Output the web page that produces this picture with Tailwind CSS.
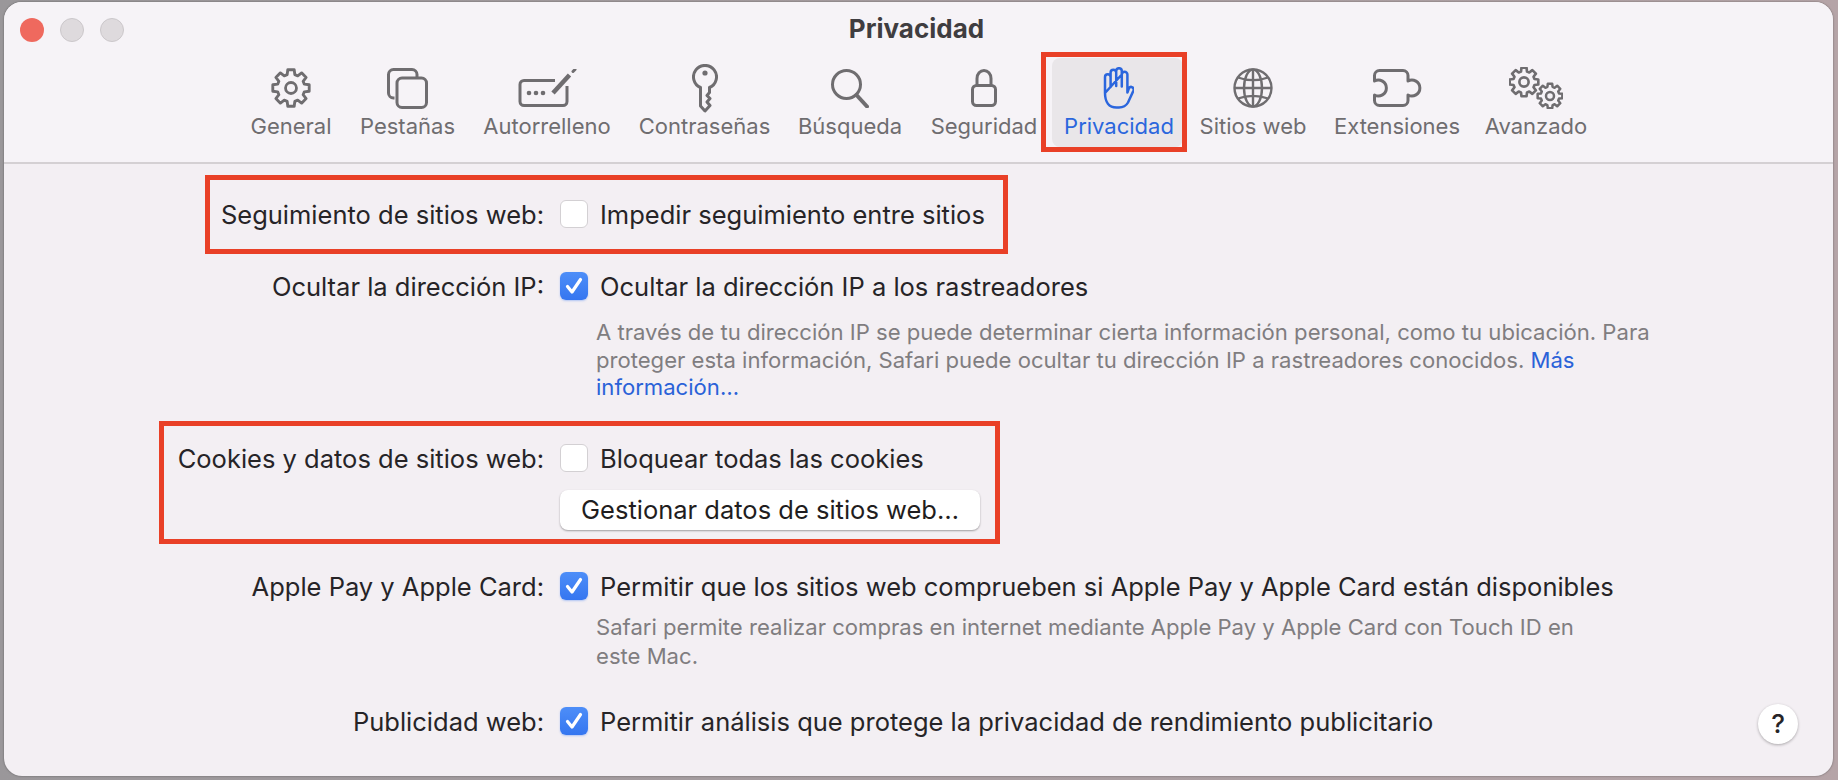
<!DOCTYPE html>
<html lang="es">
<head>
<meta charset="utf-8">
<title>Privacidad</title>
<script src="https://cdn.jsdelivr.net/npm/@tailwindcss/browser@4"></script>
</head>
<body class="m-0 overflow-hidden">
<svg width="0" height="0" class="absolute">
  <defs>
    <path id="gear" d="M-4.55 -15.86L-3.82 -21.67L3.82 -21.67L4.55 -15.86L8 -14.43L12.62 -18.02L18.02 -12.62L14.43 -8L15.86 -4.55L21.67 -3.82L21.67 3.82L15.86 4.55L14.43 8L18.02 12.62L12.62 18.02L8 14.43L4.55 15.86L3.82 21.67L-3.82 21.67L-4.55 15.86L-8 14.43L-12.62 18.02L-18.02 12.62L-14.43 8L-15.86 4.55L-21.67 3.82L-21.67 -3.82L-15.86 -4.55L-14.43 -8L-18.02 -12.62L-12.62 -18.02L-8 -14.43Z"/>
  </defs>
</svg>
<div class="w-[1838px] h-[780px] pt-[2px] pl-[4px] pr-[5px] pb-[4px] bg-gradient-to-r from-[#9a979a] to-[#b5a4a7] font-['Inter','Liberation_Sans',sans-serif]">
  <div class="relative w-full h-full rounded-[18px] overflow-hidden bg-[#f3eff3] shadow-[0_0_2px_rgba(60,60,60,0.7)]">

    <header class="relative h-[162px] bg-[#f6f3f7] border-b-2 border-[#d4d0d3]">
      <div class="absolute left-[16px] top-[16px] flex gap-[16px]">
        <span class="w-[24px] h-[24px] rounded-full bg-[#ef695e]"></span>
        <span class="w-[24px] h-[24px] rounded-full bg-[#dedadd] border border-[#cbc7ca]"></span>
        <span class="w-[24px] h-[24px] rounded-full bg-[#dedadd] border border-[#cbc7ca]"></span>
      </div>
      <h1 class="pt-[13px] text-center text-[26px] leading-[28px] font-bold text-[#3f3d40] pr-[4px]">Privacidad</h1>

      <nav class="flex items-start mt-[15px] pl-[232px] text-[#6f6d70] text-[22px] leading-[25px]">
        <div class="w-[110px] h-[89px] pt-[4px] flex flex-col items-center">
          <div class="h-[52px] flex items-center">
            <svg class="w-[42px] h-[42px] block" viewBox="-25 -25 50 50" fill="none" stroke="currentColor" stroke-width="3.400" stroke-linejoin="round"><use href="#gear"/><circle r="6.500"/></svg>
          </div>
          <span class="whitespace-nowrap">General</span>
        </div>
        <div class="w-[123px] h-[89px] pt-[4px] flex flex-col items-center">
          <div class="h-[52px] flex items-center">
            <svg class="w-[41px] h-[41px] block" viewBox="0 0 41 41" fill="none" stroke="currentColor" stroke-width="3" stroke-linejoin="round">
              <path d="M7.500 30H6.500a5 5 0 0 1-5-5V6.500a5 5 0 0 1 5-5H25a5 5 0 0 1 5 5V9"/>
              <rect x="10" y="10" width="29.500" height="29.500" rx="5"/>
            </svg>
          </div>
          <span class="whitespace-nowrap">Pestañas</span>
        </div>
        <div class="w-[156px] h-[89px] pt-[4px] flex flex-col items-center">
          <div class="h-[52px] flex items-center">
            <svg class="w-[59px] h-[38px] block" viewBox="0 0 59 38" fill="none" stroke="currentColor" stroke-width="3">
              <path d="M37 11.500H6a4 4 0 0 0-4 4V32.500a4 4 0 0 0 4 4H45a4 4 0 0 0 4-4V17"/>
              <path d="M35 24L51.500 6" stroke-width="4.500"/>
              <path d="M55 2.500L57 .5" stroke-width="3" stroke-linecap="round"/>
              <circle cx="11" cy="24" r="2.300" fill="currentColor" stroke="none"/>
              <circle cx="18" cy="24" r="2.300" fill="currentColor" stroke="none"/>
              <circle cx="25" cy="24" r="2.300" fill="currentColor" stroke="none"/>
            </svg>
          </div>
          <span class="whitespace-nowrap">Autorrelleno</span>
        </div>
        <div class="w-[159px] h-[89px] pt-[4px] flex flex-col items-center">
          <div class="h-[52px] flex items-center">
            <svg class="w-[26px] h-[49px] block" viewBox="0 0 26 49" fill="none" stroke="currentColor" stroke-width="3" stroke-linejoin="round">
              <path d="M8.500 23.500A11.500 11.500 0 1 1 17.500 23.500V28.500L15 31.500L18 34.500L15 38L18 41.500L13 47L8.500 42Z"/>
              <circle cx="13" cy="9" r="2.600" fill="currentColor" stroke="none"/>
            </svg>
          </div>
          <span class="whitespace-nowrap">Contraseñas</span>
        </div>
        <div class="w-[132px] h-[89px] pt-[4px] flex flex-col items-center">
          <div class="h-[52px] flex items-center">
            <svg class="w-[38px] h-[39px] block" viewBox="0 0 38 39" fill="none" stroke="currentColor" stroke-width="3">
              <circle cx="15.500" cy="15.500" r="14"/>
              <path d="M25.500 26L36 37.500" stroke-width="4" stroke-linecap="round"/>
            </svg>
          </div>
          <span class="whitespace-nowrap">Búsqueda</span>
        </div>
        <div class="w-[136px] h-[89px] pt-[4px] flex flex-col items-center">
          <div class="h-[52px] flex items-center">
            <svg class="w-[26px] h-[38px] block" viewBox="0 0 26 38" fill="none" stroke="currentColor" stroke-width="3">
              <rect x="1.500" y="16.500" width="23" height="20" rx="4"/>
              <path d="M6 16.500V9.500a7 8 0 0 1 14 0V16.500"/>
            </svg>
          </div>
          <span class="whitespace-nowrap">Seguridad</span>
        </div>
        <div class="w-[131px] h-[89px] pt-[4px] flex flex-col items-center rounded-[8px] bg-[#e9e6e9] text-[#2b66dd]">
          <div class="h-[52px] flex items-center">
            <svg class="w-[32px] h-[42px] block" viewBox="0 0 32 42" fill="none" stroke="currentColor" stroke-width="2.500" stroke-linejoin="round" stroke-linecap="round">
              <path d="M3 26V10a2.800 2.800 0 0 1 5.600 0V20M8.600 10V5.500a2.800 2.800 0 0 1 5.600 0V19M14.200 5V4a2.800 2.800 0 0 1 5.600 0V19.500M19.800 7.500a2.800 2.800 0 0 1 5.600 0V25.500L27 21a2.600 2.600 0 0 1 4.500 2.500L26 35.500C24 39 21 40.500 17 40.500H14.500C7 40.500 3 35 3 26Z"/>
            </svg>
          </div>
          <span class="whitespace-nowrap pl-[3px]">Privacidad</span>
        </div>
        <div class="w-[140px] h-[89px] pt-[4px] flex flex-col items-center">
          <div class="h-[52px] flex items-center">
            <svg class="w-[40px] h-[40px] block" viewBox="0 0 40 40" fill="none" stroke="currentColor" stroke-width="2.400">
              <circle cx="20" cy="20" r="18.500"/>
              <ellipse cx="20" cy="20" rx="9" ry="18.500"/>
              <path d="M20 1.500V38.500M1.500 20H38.500M5 9.500C14 13 26 13 35 9.500M5 30.500C14 27 26 27 35 30.500"/>
            </svg>
          </div>
          <span class="whitespace-nowrap">Sitios web</span>
        </div>
        <div class="w-[148px] h-[89px] pt-[4px] flex flex-col items-center">
          <div class="h-[52px] flex items-center">
            <svg class="w-[49px] h-[38px] block" viewBox="0 0 49 38" fill="none" stroke="currentColor" stroke-width="3" stroke-linejoin="round">
              <path d="M6.500 1.500H30a5 5 0 0 1 5 5V12A8 8 0 1 1 35 26V31.500a5 5 0 0 1-5 5H6.500a5 5 0 0 1-5-5V26A8 8 0 1 0 1.500 12V6.500a5 5 0 0 1 5-5Z"/>
            </svg>
          </div>
          <span class="whitespace-nowrap">Extensiones</span>
        </div>
        <div class="w-[130px] h-[89px] pt-[4px] flex flex-col items-center">
          <div class="h-[52px] flex items-center">
            <svg class="w-[54px] h-[42px] block" viewBox="0 0 54 42" fill="none" stroke="currentColor" stroke-linejoin="round">
              <g transform="translate(15 15) scale(.66)" stroke-width="4"><use href="#gear"/><circle r="7"/></g>
              <g transform="translate(41 29) scale(.57)" stroke-width="4.400"><use href="#gear"/><circle r="7"/></g>
            </svg>
          </div>
          <span class="whitespace-nowrap">Avanzado</span>
        </div>
      </nav>
    </header>

    <main class="pt-[36px] text-[25.5px] leading-[30px] text-[#262427]">
      <section class="flex">
        <div class="w-[540px] mr-[16px] text-right whitespace-nowrap">Seguimiento de sitios web:</div>
        <div class="flex gap-[12px] whitespace-nowrap">
          <span class="w-[28px] h-[28px] rounded-[6px] bg-white border border-[#d3d0d3]"></span>
          Impedir seguimiento entre sitios
        </div>
      </section>

      <section class="flex mt-[42px]">
        <div class="w-[540px] mr-[16px] text-right whitespace-nowrap">Ocultar la dirección IP:</div>
        <div>
          <div class="flex gap-[12px] whitespace-nowrap">
            <span class="w-[28px] h-[28px] rounded-[6px] bg-gradient-to-b from-[#4d8ef8] to-[#3576f0] flex items-center justify-center shadow-[0_1px_2px_rgba(53,118,240,0.35)]">
              <svg class="w-[20px] h-[20px]" viewBox="0 0 20 20" fill="none" stroke="#fff" stroke-width="3.200" stroke-linecap="round" stroke-linejoin="round"><path d="M3.500 10.500L8 16L16.500 3.500"/></svg>
            </span>
            Ocultar la dirección IP a los rastreadores
          </div>
          <p class="mt-[17px] pl-[36px] text-[22.1px] leading-[27.5px] text-[#807d80] whitespace-nowrap">A través de tu dirección IP se puede determinar cierta información personal, como tu ubicación. Para<br>proteger esta información, Safari puede ocultar tu dirección IP a rastreadores conocidos. <span class="text-[#2a62d8]">Más<br>información…</span></p>
        </div>
      </section>

      <section class="flex mt-[42.5px]">
        <div class="w-[540px] mr-[16px] text-right whitespace-nowrap">Cookies y datos de sitios web:</div>
        <div>
          <div class="flex gap-[12px] whitespace-nowrap">
            <span class="w-[28px] h-[28px] rounded-[6px] bg-white border border-[#d3d0d3]"></span>
            Bloquear todas las cookies
          </div>
          <button class="mt-[16px] w-[420px] h-[40px] rounded-[8px] bg-white text-center text-[#1f1d20] shadow-[0_1px_2px_rgba(0,0,0,0.35)] whitespace-nowrap">Gestionar datos de sitios web…</button>
        </div>
      </section>

      <section class="flex mt-[42px]">
        <div class="w-[540px] mr-[16px] text-right whitespace-nowrap">Apple Pay y Apple Card:</div>
        <div>
          <div class="flex gap-[12px] whitespace-nowrap">
            <span class="w-[28px] h-[28px] rounded-[6px] bg-gradient-to-b from-[#4d8ef8] to-[#3576f0] flex items-center justify-center shadow-[0_1px_2px_rgba(53,118,240,0.35)]">
              <svg class="w-[20px] h-[20px]" viewBox="0 0 20 20" fill="none" stroke="#fff" stroke-width="3.200" stroke-linecap="round" stroke-linejoin="round"><path d="M3.500 10.500L8 16L16.500 3.500"/></svg>
            </span>
            Permitir que los sitios web comprueben si Apple Pay y Apple Card están disponibles
          </div>
          <p class="mt-[11px] pl-[36px] text-[22.1px] leading-[29px] text-[#807d80] whitespace-nowrap">Safari permite realizar compras en internet mediante Apple Pay y Apple Card con Touch ID en<br>este Mac.</p>
        </div>
      </section>

      <section class="flex mt-[36px]">
        <div class="w-[540px] mr-[16px] text-right whitespace-nowrap">Publicidad web:</div>
        <div class="flex gap-[12px] whitespace-nowrap">
          <span class="w-[28px] h-[28px] rounded-[6px] bg-gradient-to-b from-[#4d8ef8] to-[#3576f0] flex items-center justify-center shadow-[0_1px_2px_rgba(53,118,240,0.35)]">
            <svg class="w-[20px] h-[20px]" viewBox="0 0 20 20" fill="none" stroke="#fff" stroke-width="3.200" stroke-linecap="round" stroke-linejoin="round"><path d="M3.500 10.500L8 16L16.500 3.500"/></svg>
          </span>
          Permitir análisis que protege la privacidad de rendimiento publicitario
        </div>
      </section>
    </main>

    <button class="absolute left-[1754px] top-[702px] w-[40px] h-[40px] rounded-full bg-white shadow-[0_1px_3px_rgba(0,0,0,0.3)] text-[26px] leading-[40px] font-medium text-[#262427] text-center">?</button>

    <div class="absolute left-[1037px] top-[50px] w-[146px] h-[100px] border-[5px] border-[#e94027] pointer-events-none"></div>
    <div class="absolute left-[201px] top-[173px] w-[803px] h-[79px] border-[5px] border-[#e94027] pointer-events-none"></div>
    <div class="absolute left-[155px] top-[419px] w-[841px] h-[123px] border-[5px] border-[#e94027] pointer-events-none"></div>
  </div>
</div>
</body>
</html>
